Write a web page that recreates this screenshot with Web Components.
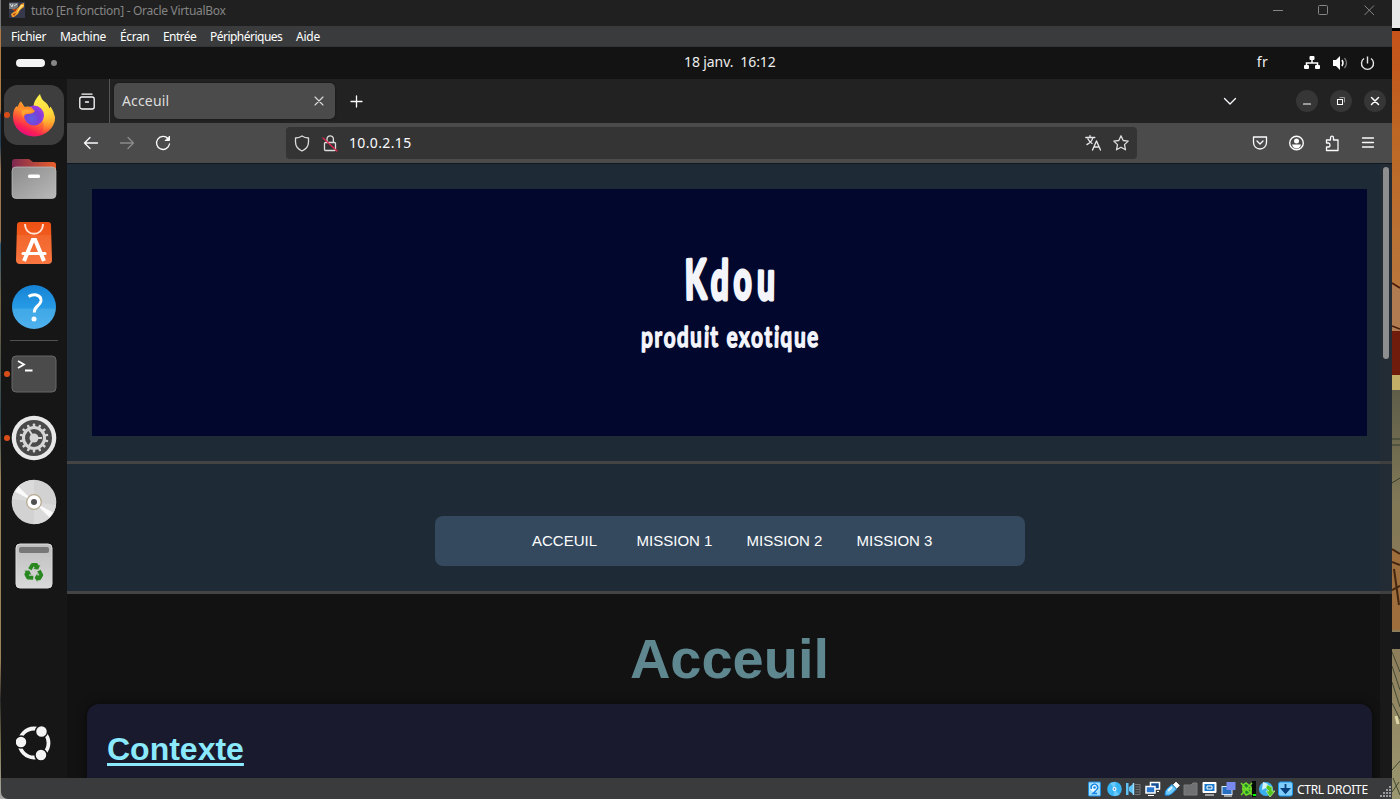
<!DOCTYPE html>
<html lang="fr"><head><meta charset="utf-8"><title>tuto [En fonction] - Oracle VirtualBox</title>
<style>html,body{margin:0;height:100%;overflow:hidden;background:#161616;font-family:"Noto Sans",sans-serif}</style></head>
<body><vm-desktop></vm-desktop>
<script>
const define=(name,css,html)=>customElements.define(name,class extends HTMLElement{
 constructor(){super();this.attachShadow({mode:'open'}).innerHTML=`<style>*{box-sizing:border-box}svg{display:block;flex:none}${css}</style>${html}`;}
});
const svg=(w,h,body,attrs='')=>`<svg width="${w}" height="${h}" viewBox="0 0 ${w} ${h}" ${attrs}>${body}</svg>`;
const line=(w,h,body,c='#fbfbfe',sw=1.3)=>svg(w,h,body,`fill="none" stroke="${c}" stroke-width="${sw}" stroke-linecap="round" stroke-linejoin="round"`);

define('vm-titlebar',`:host{display:flex;height:26px;background:#202020;align-items:flex-start;padding:2px 0 0 8px;color:#858585}
 .t{font:12px/18px "Noto Sans",sans-serif;margin-left:6px;letter-spacing:-.3px;white-space:nowrap}.c{margin-left:auto;display:flex;gap:35px;padding:3px 17px 0 0}.c svg:first-child{margin-right:-1px}`,
 svg(16,16,`<rect width="16" height="16" fill="#35394b"/><path d="M0 1h9v4L6 7H0z" fill="#777b80"/><path d="M1 2l2 3M4 2l-1 3M5 4l3-2" stroke="#d4d8dc"/><path d="M3 7h4l2-1 3-4 3-1v4l-4 3-2 4-4 3H3l-1-3 4-3z" fill="#f0a02d"/><path d="M4 7h4l-2 3zM4 12l3-1-2 3z" fill="#b3350d"/><path d="M10 6l2-3h3l-4 4-3 4z" fill="#ffdf7b"/>`)+
 `<span class="t">tuto [En fonction] - Oracle VirtualBox</span><div class="c">`+
 svg(11,11,`<path d="M0 5.5h10" stroke="#858585"/>`)+svg(11,11,`<rect x=".5" y=".5" width="9" height="9" rx="1" fill="none" stroke="#858585"/>`)+svg(11,11,`<path d="M.5 .5l9.500 9.500M10 .5L.5 10" stroke="#858585"/>`)+`</div>`);

define('vm-menubar',`:host{display:flex;height:21px;background:#3a3b3d;border-bottom:1px solid #333436;padding-left:10px;gap:14px;font:12px/21px "Noto Sans",sans-serif;color:#fff;white-space:nowrap}
 span{flex:none}`,
 `<span style="width:35px;letter-spacing:-.3px">Fichier</span><span style="width:46px;letter-spacing:-.3px">Machine</span><span style="width:29px;letter-spacing:-.4px">Écran</span><span style="width:33px;letter-spacing:-.6px">Entrée</span><span style="width:72px;letter-spacing:-.52px">Périphériques</span><span style="letter-spacing:-.25px">Aide</span>`);

define('gnome-bar',`:host{display:grid;grid-template-columns:683px 98px 1fr;height:32px;background:#131313;align-items:center;color:#eee;font:14px/20px "Noto Sans",sans-serif}
 .w{display:flex;align-items:center;gap:6px;padding-left:15px}.p{width:29px;height:8px;border-radius:4px;background:#f2f2f2}.d{width:6px;height:6px;border-radius:3px;background:#858585}
 .c{white-space:pre;letter-spacing:-.1px;padding-bottom:2px}.r{display:flex;justify-content:flex-end;align-items:center;padding-right:17px}.r span{margin-right:36px;line-height:20px;padding-bottom:2px;letter-spacing:.3px}`,
 `<div class="w"><i class="p"></i><i class="d"></i></div><div class="c">18 janv.  16:12</div><div class="r"><span>fr</span>`+
 svg(16,16,`<g fill="#fff"><rect x="5.500" y="1" width="5" height="4" rx="1"/><rect x="0" y="10" width="5" height="4" rx="1"/><rect x="11" y="10" width="5" height="4" rx="1"/></g><path d="M8 4v4M2.500 10V8h11v2" fill="none" stroke="#fff" stroke-width="1.500"/>`,'style="margin-right:12px"')+
 svg(16,16,`<path d="M1 5h3l4-4v14l-4-4H1z" fill="#fff"/><path d="M10 5q2 3 0 6" stroke="#fff" fill="none" stroke-width="1.500"/><path d="M12.500 3q4 5 0 10" stroke="#777" fill="none" stroke-width="1.300"/>`,'style="margin-right:12px"')+
 svg(15,15,`<path d="M4 2.500a6 6 0 1 0 7 0M7.500 .5v7" fill="none" stroke="#e8e8e8" stroke-width="1.400"/>`)+`</div>`);

define('dock-item',`:host{display:grid;place-items:center;width:60px;height:60px;border-radius:14px;position:relative;flex:none}:host([active]){background:#3e3e3e}
 i{display:none;position:absolute;left:0;top:27px;width:6px;height:6px;border-radius:3px;background:#d94d19}:host([running]) i{display:block}`,`<i></i><slot></slot>`);

const gear=[...Array(14)].map((_,i)=>`<rect x="20.800" y="7.500" width="2.400" height="5" rx=".8" transform="rotate(${i*360/14} 22 22)"/>`).join('');
const arrows=[0,120,240].map(a=>`<path d="M13.200 25.200l2.800-4.400q.6-.8 1.700-.8h3.600q1 0 1.600 1l1 1.700 1.500-.9-2.200 4.600-5-.3 1.600-1-1.100-1.700-2.200 3.900z" transform="rotate(${a} 19 29.500)"/>`).join('');
define('app-dock',`:host{display:flex;flex-direction:column;width:66px;background:#161616;padding:6px 3px 5px;gap:4px}hr{width:48px;height:1px;border:0;background:#515151;margin:-1px auto;flex:none}.last{margin-top:auto}`,
`<dock-item active running>${svg(44,46,`<defs><linearGradient id="fxBody" x1=".85" y1=".05" x2=".3" y2="1"><stop offset=".1" stop-color="#ffe03b"/><stop offset=".4" stop-color="#ffa02c"/><stop offset=".62" stop-color="#ff5a36"/><stop offset=".82" stop-color="#fa1f55"/><stop offset="1" stop-color="#e00a8a"/></linearGradient><radialGradient id="fxGlobe" cx=".4" cy=".65" r=".65"><stop stop-color="#5d5fe0"/><stop offset=".6" stop-color="#7a3fd8"/><stop offset="1" stop-color="#a23be0"/></radialGradient><linearGradient id="fxFlame" x1=".3" y1="0" x2=".5" y2="1"><stop stop-color="#fff14f"/><stop offset=".55" stop-color="#ffd93c"/><stop offset="1" stop-color="#ff9e2c" stop-opacity="0"/></linearGradient></defs>
<path d="M9 9.500l3.500 5.500q3-1 6 0h4L36 14l7 11a21 19.500 0 0 1-42 0q-.3-8 4-11l1.500 2q0-5 2.500-6.500z" fill="url(#fxBody)"/><path d="M28 2q1 5 5 8t4 7l1.500-2.500q6 9 4 16-3 9-13 11 4-7 1-14-2-6-9-10-1-8 6.500-15.500z" fill="url(#fxFlame)"/><circle cx="22" cy="23.500" r="10" fill="url(#fxGlobe)"/><path d="M9 9.500q0 4 4 5.500h6l4 4q-2 3-7 3-4 0-4.500 4-3-4-2-8 .5-1 2-2-4 0-6 2 0-6 3.500-8.500z" fill="#ff8a2b"/><path d="M10 18q6-2 12 1-3 2-7 2-3 0-4 3-2-3-1-6z" fill="#ffa432"/>`)}</dock-item>
<dock-item>${svg(46,42,`<defs><linearGradient id="folderBack"><stop stop-color="#7d2951"/><stop offset="1" stop-color="#eb602b"/></linearGradient><linearGradient id="folderFront" x1="0" y1="0" x2="1" y2="1"><stop stop-color="#8b8b8b"/><stop offset="1" stop-color="#b9b9b9"/></linearGradient></defs><path d="M1 36V4q0-3 3-3h14l4 3h20q3 0 3 3v28z" fill="url(#folderBack)"/><rect x="1" y="9" width="44" height="31.500" rx="4" fill="url(#folderFront)" stroke="#c2c2c2" stroke-width=".7"/><rect x="17" y="16.500" width="12" height="3.500" rx="1.500" fill="#fff"/>`)}</dock-item>
<dock-item>${svg(38,44,`<defs><linearGradient id="bag" x1="0" x2="0" y2="1"><stop stop-color="#ef5013"/><stop offset=".3" stop-color="#f05a1d"/><stop offset=".31" stop-color="#f2662c"/><stop offset="1" stop-color="#fa7640"/></linearGradient></defs><path d="M5 1h28q3 0 3 3l1 35q0 4-4 4H5q-4 0-4-4L2 4q0-3 3-3z" fill="url(#bag)"/><path d="M10 3c0 13 18 13 18 0" fill="none" stroke="#ffe3d6" stroke-width="1.800"/><path d="M9 40L17.800 19h2.400L29 40" fill="none" stroke="#fff" stroke-width="4"/><path d="M8 32.500h22" fill="none" stroke="#fff" stroke-width="3" stroke-linecap="round"/>`)}</dock-item>
<dock-item><svg width="46" height="46"><defs><linearGradient id="help" x1="0" x2="0" y2="1"><stop stop-color="#1683d5"/><stop offset=".53" stop-color="#279be6"/><stop offset=".54" stop-color="#3fa8e6"/><stop offset="1" stop-color="#4eb2ee"/></linearGradient></defs><circle cx="23" cy="23" r="22" fill="url(#help)"/><path d="M17.500 12.500q4-2.500 8-1.500 5 1.500 4.500 6-.5 2.500-3.500 5-3.200 2.800-3.200 6.500" fill="none" stroke="#fff" stroke-width="3"/><circle cx="23" cy="35" r="2.500" fill="#fff"/></svg></dock-item>
<hr>
<dock-item running>${svg(46,38,`<rect x="1" y="1" width="44" height="36" rx="4" fill="#4b4b4b" stroke="#666"/><path d="M7 6l6 3.500-6 3.500M14 15.500h7.500" fill="none" stroke="#fff" stroke-width="1.800"/>`)}</dock-item>
<dock-item running>${svg(46,46,`<circle cx="23" cy="23" r="22.300" fill="#e8e8e8"/><circle cx="23" cy="23" r="18" fill="#494949"/><g transform="translate(1 1)"><g fill="#d5d5d5">${gear}</g><circle cx="22" cy="22" r="10.500" fill="none" stroke="#d5d5d5" stroke-width="3"/><circle cx="22" cy="22" r="4.500" fill="#d5d5d5"/><path d="M22 22h8M22 22l-5-8M22 22l-5 8" stroke="#d5d5d5" stroke-width="2"/></g>`)}</dock-item>
<dock-item>${svg(46,46,`<circle cx="23" cy="23" r="22.300" fill="#d2d2d2"/><path d="M23 23L1 20A22 22 0 0 1 23 1zM23 23l22 3a22 22 0 0 1-22 19z" fill="#dadada"/><path d="M23 23L4 12.500l3.500-5zM23 23l19 10.500-3.500 5z" fill="#fafafa"/><circle cx="23" cy="23" r="7.300" fill="#fff" stroke="#b6aa91" stroke-width="1.300"/><circle cx="23" cy="23" r="3" fill="#505050"/>`)}</dock-item>
<dock-item>${svg(38,46,`<defs><linearGradient id="bin" x1="0" x2="0" y2="1"><stop stop-color="#bebebe"/><stop offset="1" stop-color="#d9d9d9"/></linearGradient></defs><rect x="1" y="1" width="36" height="44" rx="4" fill="url(#bin)" stroke="#ddd"/><rect x="4" y="4" width="30" height="6" rx="2" fill="#777"/><g fill="#28881f">${arrows}</g>`)}</dock-item>
<dock-item class="last">${svg(36,36,`<circle cx="18" cy="18" r="14.500" fill="none" stroke="#f4f4f4" stroke-width="3.800"/><g fill="#f4f4f4" stroke="#161616" stroke-width="1.500"><circle cx="5" cy="17" r="6"/><circle cx="25.500" cy="6.500" r="6"/><circle cx="25" cy="30" r="6"/></g>`)}</dock-item>`);

define('ff-tabs',`:host{display:flex;height:44px;background:#222;align-items:center;font:14px "Noto Sans",sans-serif;color:#ddd}
 .v{width:43px;height:44px;border-right:1px solid #555;display:grid;place-items:center;padding-right:2px}.t{width:221px;height:36px;border-radius:5px;background:#4b4b4b;margin-left:4px;padding:0 11px 0 8px;display:flex;align-items:center;justify-content:space-between;box-shadow:0 0 2px #111;letter-spacing:.15px}.t span{padding-bottom:2px}
 .plus{margin-left:15px}.down{margin-left:auto;margin-right:59px}.b{width:22px;height:22px;border-radius:11px;background:#363636;display:grid;place-items:center;margin-right:12px}.b:last-child{margin-right:6px}`,
 `<div class="v">${line(16,17,`<path d="M3 1.200h10"/><rect x=".8" y="4" width="14.400" height="12" rx="2"/><path d="M6.500 9h3"/>`)}</div><div class="t"><span>Acceuil</span>${line(10,10,'<path d="M1 1l8 8M9 1L1 9"/>','#ddd',1.100)}</div><div class="plus">${line(13,13,'<path d="M6.500 1v11M1 6.500h11"/>')}</div><div class="down">${line(14,9,'<path d="M1.500 1.500L7 7l5.500-5.500"/>')}</div><div class="b">${line(10,10,'<path d="M1.500 8h7"/>','#fff',1.200)}</div><div class="b">${svg(10,10,'<rect x="1.500" y="3.500" width="5" height="5" fill="none" stroke="#fff"/><path d="M3.500 1.500h5v5" fill="none" stroke="#999"/>')}</div><div class="b">${line(10,10,'<path d="M1.500 1.500l7 7M8.500 1.500l-7 7"/>','#fff',1.500)}</div>`);

define('ff-toolbar',`:host{display:flex;height:40px;background:#4b4b4b;align-items:center;padding:0 16px;color:#fbfbfe}
 .n{display:flex;gap:20px}.u{width:851px;height:32px;background:#343434;border-radius:4px;margin-left:115px;display:flex;align-items:center;padding:0 8px;font:14px "Noto Sans",sans-serif}.u span{margin-left:11px;letter-spacing:.36px;padding-bottom:2px}.u .x{margin-left:auto;display:flex;gap:12px}.r{margin-left:auto;display:flex;gap:20px}.r svg:nth-child(-n+2){transform:translateX(1px)}`,
 `<div class="n">${line(16,16,'<path d="M14.500 8H1.500M7 2.500L1.500 8 7 13.500"/>')}${line(16,16,'<path d="M1.500 8h13M9 2.500L14.500 8 9 13.500"/>','#8b8b8b')}${line(16,16,'<path d="M13 3.700A6.500 6.500 0 1 0 14.500 9"/><path d="M14.500 1.500v4h-4z" fill="#fbfbfe" stroke-width="1"/>')}</div>
 <div class="u">${line(16,17,'<path d="M8 1q-3 2-6.500 2v4q0 6 6.500 9 6.500-3 6.500-9V3Q11 3 8 1z"/>','#ddd',1.300)}<div style="margin-left:12px">${line(16,17,'<rect x="2.500" y="7.500" width="11" height="8" rx="1"/><path d="M5 7V4a3.200 3.200 0 0 1 6.400 0v3"/><path d="M1 3l14 13" stroke="#e22850"/>','#ddd',1.300)}</div><span>10.0.2.15</span><div class="x">${line(16,16,'<path d="M.8 2.500h9M5 .8v1.700M2 9.500Q7 7 7.800 2.500M3 4q1.500 3 4 4.500M7.500 15L11.500 6l4 9M9 12h5"/>','#e5e5e8',1.400)}${line(16,16,'<path d="M8 .8l2.200 4.700 5 .6-3.700 3.500 1 5.200L8 12.200l-4.500 2.600 1-5.200L.8 6.100l5-.6z"/>','#ddd',1.300)}</div></div>
 <div class="r">${line(16,16,'<path d="M1.500 2h13v5.500a6.500 6.500 0 0 1-13 0zM5 6l3 3 3-3"/>')}${svg(17,16,'<circle cx="8.500" cy="8" r="6.800" fill="none" stroke="#fbfbfe" stroke-width="1.400"/><circle cx="8.500" cy="6" r="2.500" fill="#fff"/><path d="M4 9.500h9q-1 4-4.500 4T4 9.500z" fill="#fff"/>')}${line(16,17,'<path d="M2.500 8V5h4V3q0-1.800 1.500-1.800T9.500 3v2H14v10.500H2.500V12h2q1.500 0 1.500-2T4.500 8z"/>')}${line(16,16,'<path d="M2.500 3h11M2.500 7.500h11M2.500 12h11"/>')}</div>`);

define('site-page',`:host{display:block;flex:1;min-height:0;overflow:hidden;background:#121212;border-top:1px solid #111820;font-family:"Liberation Sans",Arial,sans-serif;position:relative}
 header{height:300px;padding:25px;background:#1f2a37;border-bottom:3px solid #444}.banner{height:247px;background:#02082d;display:flex;justify-content:center;padding-top:59px}.banner svg{overflow:visible;font-variant-ligatures:none}
 nav{height:130px;background:#1f2a37;border-bottom:3px solid #444;padding-top:52px}.menu{width:590px;height:50px;border-radius:8px;background:#34495e;margin:0 auto;display:flex;justify-content:center;align-items:center;padding-bottom:2px}.menu a{width:110px;text-align:center;color:#fff;font-size:15px}
 h1{margin:32px 0 13px;font-size:56px;line-height:65px;text-align:center;color:#5f8790}.card{height:200px;margin:0 20px;padding:27px 20px;border-radius:12px;background:#1a1a2e;box-shadow:0 0 10px #0008}h2{margin:0;font-size:32px;line-height:37px;color:#8be9fd;text-decoration:underline;text-decoration-thickness:3px;text-underline-offset:3px}
 .track{position:absolute;right:0;top:0;bottom:0;width:12px;background:#2e2e2e40}.thumb{position:absolute;left:3px;top:3px;width:6px;height:192px;border-radius:3px;background:#8e8e8e}`,
 `<header><div class="banner"><svg width="600" height="115" font-family="Lato,sans-serif" font-weight="700" fill="#f3f5fb" stroke="#f3f5fb" stroke-linejoin="round"><text transform="translate(255 51)" font-size="54" stroke-width="4" letter-spacing="9" textLength="95" lengthAdjust="spacingAndGlyphs" rotate="-1 1 -1 1">Kdou</text><text transform="translate(211 99)" font-size="29" stroke-width="1.500" letter-spacing="2.300" textLength="179" lengthAdjust="spacingAndGlyphs" rotate="1 -1 2 0 -1 2 -2 0 1 -1 1 -1 2 -1 1 -1">produit exotique</text></svg></div></header><nav><div class="menu"><a>ACCEUIL</a><a>MISSION 1</a><a>MISSION 2</a><a>MISSION 3</a></div></nav><h1>Acceuil</h1><div class="card"><h2>Contexte</h2></div><div class="track"><div class="thumb"></div></div>`);

define('vm-status',`:host{display:flex;height:21px;background:#3a3b3d;justify-content:flex-end;align-items:center;gap:3px;font:12px/20px "Noto Sans",sans-serif;color:#fff;border-radius:0 0 0 7px}svg:first-of-type{margin-right:1px}svg:not(.grip){transform:translateX(1px)}span{margin-left:1px;width:72px;letter-spacing:-.3px;white-space:nowrap;padding-top:2px}.grip{margin-left:7px}`,
 svg(16,16,'<rect x="1.500" y="1" width="12" height="14" rx="1" fill="#9bdcff" stroke="#1f8ee0"/><circle cx="7.500" cy="6.500" r="4.500" fill="#e9f8ff"/><path d="M4.500 8a3.300 3.300 0 1 1 5 1L6 12.500h4" stroke="#1688e4" stroke-width="1.500" fill="none"/><circle cx="7.500" cy="6.500" r="1.300" fill="#1688e4"/>')+
 svg(16,16,'<circle cx="7.500" cy="8" r="7.300" fill="#38b4f5"/><path d="M7.500 8L3 2l6-1zM7.500 8l5 6-6 1z" fill="#6ac8fa"/><circle cx="7.500" cy="8" r="2" fill="#fff"/><circle cx="7.500" cy="8" r=".8" fill="#174f97"/>')+
 svg(16,16,'<path d="M0 2h2.500v12H0zM3 6l4-3v10l-4-3z" fill="#5ec2f7"/><path d="M7.500 2v12" stroke="#9bdcff" stroke-width="1.500"/><path d="M9 3.500h5v10H9M9.500 6h4M9.500 8.500h4M9.500 11h4" fill="none" stroke="#77797b"/>')+
 svg(16,16,'<rect x="5.500" y="1.500" width="9" height="6.500" fill="#174f97" stroke="#fff" stroke-width="1.500"/><path d="M12 10.500h2" stroke="#fff"/><rect x="1" y="5.500" width="9" height="6.500" fill="#2d78cf" stroke="#fff" stroke-width="1.500"/><path d="M3 14.500h6" stroke="#fff"/>')+
 svg(16,16,'<path d="M9 4l3-3 3.500 3.500-3 3" fill="#fff" stroke="#ddd"/><path d="M1 14q0-4 2-6l5-4.500 4.500 4.500-5 5q-2.500 2-6.500 1z" fill="#6dc8fb" stroke="#178be0"/><path d="M4 10l4-4" stroke="#d5f2ff" stroke-width="2"/>')+
 svg(16,16,'<path d="M1 4h7l2-2h4v12H1z" fill="#707173" stroke="#7d7e80"/>')+
 svg(16,16,'<path d="M1 1.500h13v10H1zM3 14h9" fill="#fff" stroke="#fff"/><path d="M2.500 3h10v7h-10z" fill="#1879cf"/><path d="M5 5h5v3H5z" fill="#2774ad" stroke="#fff"/>')+
 svg(16,16,'<rect x="1" y="5.500" width="10" height="8" fill="#276fc0" stroke="#d9ebff"/><rect x="5.500" y="1" width="9" height="8" fill="#788af0"/><path d="M3 15h8" stroke="#fff"/>')+
 svg(16,16,'<path d="M12 0h4v16h-4z" fill="#050b05"/><path d="M1 2l11 12M12 2L1 14M2 8h10M3 4l3-2 5 4v6l-5 2-3-4z" fill="#1e8828" stroke="#71dc28" stroke-width="1.500"/><path d="M13 14h3" stroke="#0f0" stroke-width="2"/>')+
 svg(16,16,'<circle cx="7" cy="8" r="7" fill="#3aaff0"/><path d="M4 1l5 2-2 4-4 2z" fill="#d5f2ff"/><path d="M8 4l5 2v4h3l-5 6-4-6h3L7 7z" fill="#53c51c" stroke="#c1f3aa" stroke-width=".7"/>')+
 svg(16,16,'<rect x=".5" y="1" width="14" height="14" rx="2" fill="#7ecdfb" stroke="#1a97ed"/><path d="M7.500 3v6M4 8l3.500 4L11 8z" fill="#07407c" stroke="#07407c" stroke-width="1.800"/>')+
 `<span>CTRL DROITE</span>`+svg(13,13,'<path d="M10 1h2M7 4h5M4 7h8M1 10h11" stroke="#999b9e" stroke-width="2" stroke-dasharray="2 1"/>','class="grip" style="align-self:flex-end"'));

define('desktop-edge',`:host{display:block;width:8px;overflow:hidden}`,
 `<svg width="8" height="799"><defs><linearGradient id="o" x1="0" x2="0" y2="1"><stop stop-color="#c65319"/><stop offset=".35" stop-color="#bd6724"/><stop offset="1" stop-color="#b77b43"/></linearGradient><linearGradient id="s" x1="0" x2="0" y2="1"><stop stop-color="#5e5d49"/><stop offset=".28" stop-color="#827957"/><stop offset=".55" stop-color="#8b7957"/><stop offset="1" stop-color="#9b9770"/></linearGradient></defs><rect width="8" height="799" fill="#e9e9e9"/><path d="M0 28h8v3H0z" fill="#000"/><path d="M0 31h8v302H0z" fill="url(#o)"/><path d="M0 283l8 6v42H0z" fill="#b17b51"/><path d="M0 283l8 5M0 326l8 3" stroke="#451a0c" stroke-width="1.500"/><path d="M0 331h8v44H0z" fill="#6f1c0c"/><path d="M0 375h8v15H0z" fill="#c2ae67"/><path d="M0 390h8v409H0z" fill="url(#s)"/><path d="M0 439h8M0 445h8M0 483l8-5" stroke="#343c2e"/><path d="M0 549l8 5v76H0z" fill="#9e6e3d"/><path d="M0 549l8 5M0 562l8 3M2 569l5 36M0 590l8-4" stroke="#442711" stroke-width="2"/><path d="M0 632h8v17H0z" fill="#161819"/><path d="M0 652l8 20M0 666l8 24M0 682l8 25M0 703l8 16M0 770l8-9M1 778l7 17M0 792l7-10" fill="none" stroke="#414934"/><path d="M4 716l2 8" stroke="#ddd4a6" stroke-width="3"/></svg>`);

define('vm-desktop',`:host{display:flex;width:1400px;height:799px;background:linear-gradient(#777 0 28px,#ad7945 30px 110px,#263e54 115px 145px,#9c7650 170px 240px,#285a78 245px,#766342 300px,#28454f 420px,#9b8158 480px 660px,#29282a 700px,#817950 750px,#aaa 799px);padding-left:1px}
 .win{width:1391px;display:flex;flex-direction:column}.mid{display:flex;flex:1;min-height:0}.ff{display:flex;flex-direction:column;width:1325px}`,
 `<div class="win"><vm-titlebar></vm-titlebar><vm-menubar></vm-menubar><gnome-bar></gnome-bar><div class="mid"><app-dock></app-dock><div class="ff"><ff-tabs></ff-tabs><ff-toolbar></ff-toolbar><site-page></site-page></div></div><vm-status></vm-status></div><desktop-edge></desktop-edge>`);
</script></body></html>
